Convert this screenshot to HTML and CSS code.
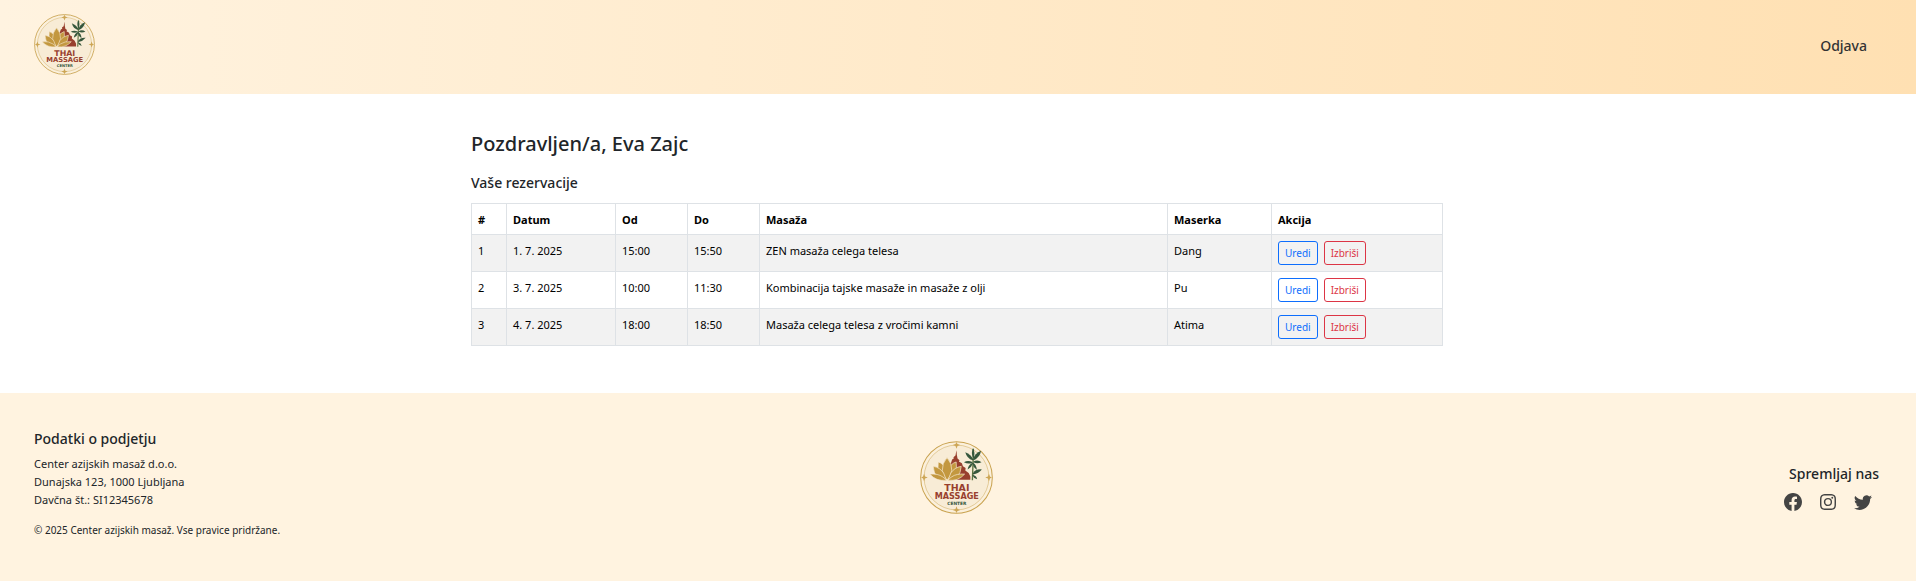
FILE: index.html
```html
<!DOCTYPE html>
<html lang="sl">
<head>
<meta charset="utf-8">
<meta name="viewport" content="width=device-width, initial-scale=1">
<title>Thai Massage Center – Moje rezervacije</title>
<link rel="stylesheet" href="styles.css">
</head>
<body>
<header class="topbar">
  <a class="brand" href="#" aria-label="Thai Massage Center">
    <svg class="logo logo-small" viewBox="33 35 216 216">
      <g id="emblem">
        <circle cx="141" cy="143" r="106" fill="#fbf0dc" stroke="#c9a24f" stroke-width="3"/>
        <circle cx="141" cy="143" r="96" fill="#f8ecd6" stroke="#d8b978" stroke-width="2"/>
        <g fill="#cda655">
          <path d="M141 38l3 6 8 3-8 3-3 8-3-8-8-3 8-3z"/>
          <path d="M141 228l3 8 8 3-8 3-3 6-3-6-8-3 8-3z"/>
          <path d="M36 143l6-3 3-8 3 8 8 3-8 3-3 8-3-8z"/>
          <path d="M226 143l8-3 3-8 3 8 6 3-6 3-3 8-3-8z"/>
        </g>
        <path fill="#98402e" d="M141 62l1 14 2 11 6 5-2 4 9 5 3 9 8 5-1 7 10 8 5 10v10h-56l-12-40 6-8 5-3 3-9 5-3-1-4 6-5 2-11z"/>
        <g fill="#c3983f" stroke="#f8ecd6" stroke-width="2">
          <path d="M87 97q16 5 23 22v32q-29-18-23-54z"/>
          <path d="M140 97q-16 5-23 22v32q29-18 23-54z"/>
          <path d="M113 84q15 17 14 38-2 18-14 29-12-11-14-29-1-21 14-38z"/>
          <path d="M72 110q20 3 31 20l8 21q-36 0-39-41z"/>
          <path d="M155 110q-20 3-31 20l-8 21q36 0 39-41z"/>
          <path d="M62 133q24-2 38 8 8 5 11 10-30 4-49-18z"/>
          <path d="M165 133q-24-2-38 8-8 5-11 10 30 4 49-18z"/>
        </g>
        <path d="M188 151q2-48 3-92" fill="none" stroke="#5c7341" stroke-width="4"/>
        <g fill="#36573c">
          <path d="M190 85q-7-14 0-30 7 16 2 30z"/>
          <path d="M189 92q-17-5-22-24 17 7 24 22z"/>
          <path d="M190 90q4-18 24-26-4 20-22 28z"/>
          <path d="M188 97q-14-6-25 1 14 7 25 1z"/>
          <path d="M191 96q13-7 24 2-13 5-24 0z"/>
          <path d="M188 99q-12 6-14 20 12-6 16-18z"/>
          <path d="M190 99q11 7 11 22-11-8-13-20z"/>
          <path d="M189 131q8-14 27-12-9 12-26 15z"/>
          <path d="M189 135q11 3 13 13-10-3-14-11z"/>
        </g>
        <text class="logo-name" x="142" y="183" font-size="28">THAI</text>
        <text class="logo-name" x="142" y="206" font-size="24">MASSAGE</text>
        <text class="logo-sub" x="142" y="223" font-size="13">CENTER</text>
      </g>
    </svg>
  </a>
  <a class="logout" href="#">Odjava</a>
</header>

<main class="container">
  <h1 class="greeting">Pozdravljen/a, Eva Zajc</h1>
  <h2 class="subtitle">Vaše rezervacije</h2>
  <table class="bookings">
    <colgroup>
      <col class="c-num"><col class="c-date"><col class="c-time"><col class="c-time"><col><col class="c-staff"><col class="c-action">
    </colgroup>
    <thead>
      <tr><th>#</th><th>Datum</th><th>Od</th><th>Do</th><th>Masaža</th><th>Maserka</th><th>Akcija</th></tr>
    </thead>
    <tbody>
      <tr><td>1</td><td>1. 7. 2025</td><td>15:00</td><td>15:50</td><td>ZEN masaža celega telesa</td><td>Dang</td>
        <td class="action-cell"><div class="actions"><button class="btn btn-edit" type="button">Uredi</button><button class="btn btn-delete" type="button">Izbriši</button></div></td></tr>
      <tr><td>2</td><td>3. 7. 2025</td><td>10:00</td><td>11:30</td><td>Kombinacija tajske masaže in masaže z olji</td><td>Pu</td>
        <td class="action-cell"><div class="actions"><button class="btn btn-edit" type="button">Uredi</button><button class="btn btn-delete" type="button">Izbriši</button></div></td></tr>
      <tr><td>3</td><td>4. 7. 2025</td><td>18:00</td><td>18:50</td><td>Masaža celega telesa z vročimi kamni</td><td>Atima</td>
        <td class="action-cell"><div class="actions"><button class="btn btn-edit" type="button">Uredi</button><button class="btn btn-delete" type="button">Izbriši</button></div></td></tr>
    </tbody>
  </table>
</main>

<footer class="footer">
  <div class="company">
    <h3 class="footer-title">Podatki o podjetju</h3>
    <p class="address">Center azijskih masaž d.o.o.<br>Dunajska 123, 1000 Ljubljana<br>Davčna št.: SI12345678</p>
    <p class="copyright">© 2025 Center azijskih masaž. Vse pravice pridržane.</p>
  </div>
  <svg class="logo logo-large" viewBox="33 35 216 216" role="img" aria-label="Thai Massage Center"><use href="#emblem"/></svg>
  <div class="social">
    <h3 class="footer-title">Spremljaj nas</h3>
    <div class="social-links">
      <a href="#" aria-label="Facebook"><svg class="icon" viewBox="0 0 16 16"><path d="M16 8.049c0-4.446-3.582-8.05-8-8.05C3.58 0-.002 3.603-.002 8.05c0 4.017 2.926 7.347 6.75 7.951v-5.625h-2.03V8.05H6.75V6.275c0-2.017 1.195-3.131 3.022-3.131.876 0 1.791.157 1.791.157v1.98h-1.009c-.993 0-1.303.621-1.303 1.258v1.51h2.218l-.354 2.326H9.25V16c3.824-.604 6.75-3.934 6.75-7.951"/></svg></a>
      <a href="#" aria-label="Instagram"><svg class="icon icon-inset" viewBox="0 0 16 16"><path d="M8 0C5.829 0 5.556.01 4.703.048 3.85.088 3.269.222 2.76.42a3.9 3.9 0 0 0-1.417.923A3.9 3.9 0 0 0 .42 2.76C.222 3.268.087 3.85.048 4.7.01 5.555 0 5.827 0 8.001c0 2.172.01 2.444.048 3.297.04.852.174 1.433.372 1.942.205.526.478.972.923 1.417.444.445.89.719 1.416.923.51.198 1.09.333 1.942.372C5.555 15.99 5.827 16 8 16s2.444-.01 3.298-.048c.851-.04 1.434-.174 1.943-.372a3.9 3.9 0 0 0 1.416-.923c.445-.445.718-.891.923-1.417.197-.509.332-1.09.372-1.942C15.99 10.445 16 10.173 16 8s-.01-2.445-.048-3.299c-.04-.851-.175-1.433-.372-1.941a3.9 3.9 0 0 0-.923-1.417A3.9 3.9 0 0 0 13.24.42c-.51-.198-1.092-.333-1.943-.372C10.443.01 10.172 0 7.998 0zm0 1.442c2.136 0 2.389.007 3.232.046.78.035 1.204.166 1.486.275.373.145.64.319.92.599s.453.546.598.92c.11.281.24.705.275 1.485.039.843.047 1.096.047 3.231s-.008 2.389-.047 3.232c-.035.78-.166 1.203-.275 1.485a2.5 2.5 0 0 1-.599.919c-.28.28-.546.453-.92.598-.28.11-.704.24-1.485.276-.843.038-1.096.047-3.232.047s-2.39-.009-3.233-.047c-.78-.036-1.203-.166-1.485-.276a2.5 2.5 0 0 1-.92-.598 2.5 2.5 0 0 1-.6-.92c-.109-.281-.24-.705-.275-1.485-.038-.843-.046-1.096-.046-3.233s.008-2.388.046-3.231c.036-.78.166-1.204.276-1.486.145-.373.319-.64.599-.92s.546-.453.92-.598c.282-.11.705-.24 1.485-.276.738-.034 1.024-.044 2.515-.045zm4.27 1.328a.96.96 0 1 0 0 1.92.96.96 0 0 0 0-1.92M8 3.892a4.109 4.109 0 1 0 0 8.217 4.109 4.109 0 0 0 0-8.217m0 1.441a2.667 2.667 0 1 1 0 5.334 2.667 2.667 0 0 1 0-5.334"/></svg></a>
      <a href="#" aria-label="Twitter"><svg class="icon" viewBox="0 0 16 16"><path d="M5.026 15c6.038 0 9.341-5.003 9.341-9.334q.002-.211-.006-.422A6.7 6.7 0 0 0 16 3.542a6.7 6.7 0 0 1-1.889.518 3.3 3.3 0 0 0 1.447-1.817 6.5 6.5 0 0 1-2.087.793A3.286 3.286 0 0 0 7.875 6.03a9.32 9.32 0 0 1-6.767-3.429 3.29 3.29 0 0 0 1.018 4.382A3.3 3.3 0 0 1 .64 6.575v.045a3.29 3.29 0 0 0 2.632 3.218 3.2 3.2 0 0 1-.865.115 3 3 0 0 1-.614-.057 3.28 3.28 0 0 0 3.067 2.277A6.6 6.6 0 0 1 .78 13.58a6 6 0 0 1-.78-.045A9.34 9.34 0 0 0 5.026 15"/></svg></a>
    </div>
  </div>
</footer>
</body>
</html>
```
FILE: styles.css
```css
* { box-sizing: border-box; }

body {
  margin: 0;
  min-height: 100vh;
  display: flex;
  flex-direction: column;
  font-family: "Segoe UI", "Noto Sans", sans-serif;
  font-size: 11px;
  line-height: 18px;
  color: #212529;
  background: #fff;
}

h1, h2, h3, p { margin: 0; }

.logo { display: block; }
.logo-small { width: 61px; height: 61px; }
.logo-large { width: 73px; height: 73px; }
.logo-name, .logo-sub {
  font-family: "DejaVu Sans", sans-serif;
  font-weight: 700;
  text-anchor: middle;
}
.logo-name { fill: #98402e; }
.logo-sub { fill: #36573c; }

.topbar {
  display: flex;
  align-items: center;
  justify-content: space-between;
  padding: 14px 49px 19px 34px;
  background: linear-gradient(to right, #fff3e0, #ffe0b2);
}
.logout {
  padding-top: 2px;
  font-size: 14px;
  font-weight: 500;
  color: #333;
  text-decoration: none;
}

.container {
  width: 100%;
  max-width: 990px;
  margin: 0 auto;
  padding: 37px 10px 47px 8px;
}
.greeting {
  font-size: 20px;
  line-height: 26px;
  font-weight: 500;
  margin-bottom: 17px;
}
.subtitle {
  font-size: 14px;
  line-height: 18px;
  font-weight: 500;
  margin-bottom: 11px;
}

.bookings {
  width: 100%;
  table-layout: fixed;
  border-collapse: collapse;
  color: #000;
}
.bookings th, .bookings td {
  padding: 7px 6px 5px;
  border: 1px solid #dee2e6;
  text-align: left;
  vertical-align: top;
}
.bookings .action-cell { padding: 6px; }
.bookings th { font-weight: 700; }
.bookings tbody tr:nth-child(odd) { background: #f2f2f2; }
.c-num { width: 35px; }
.c-date { width: 109px; }
.c-time { width: 72px; }
.c-staff { width: 104px; }
.c-action { width: 171px; }

.actions { display: flex; gap: 6px; }
.btn {
  padding: 2px 6px;
  border: 1px solid;
  border-radius: 3px;
  background: transparent;
  font-family: inherit;
  font-size: 10px;
  line-height: 18px;
}
.btn-edit { color: #0d6efd; border-color: #0d6efd; }
.btn-delete { color: #dc3545; border-color: #dc3545; }

.footer {
  flex: 1;
  display: grid;
  grid-template-columns: 1fr auto 1fr;
  align-items: start;
  padding: 36px 37px 36px 34px;
  background: #fff3e0;
}
.footer-title {
  font-size: 14px;
  line-height: 20px;
  font-weight: 500;
}
.address { margin: 6px 0 12px; }
.copyright { font-size: 10px; }
.footer .logo-large { margin-top: 12px; }
.social {
  justify-self: end;
  margin-top: 35px;
  text-align: right;
}
.social-links {
  display: flex;
  align-items: center;
  justify-content: flex-end;
  gap: 17px;
  padding-right: 7px;
  margin-top: 9px;
}
.social-links a { color: #444; }
.icon {
  display: block;
  width: 18px;
  height: 18px;
  fill: currentColor;
}
.icon-inset { padding: 1px; }
```
